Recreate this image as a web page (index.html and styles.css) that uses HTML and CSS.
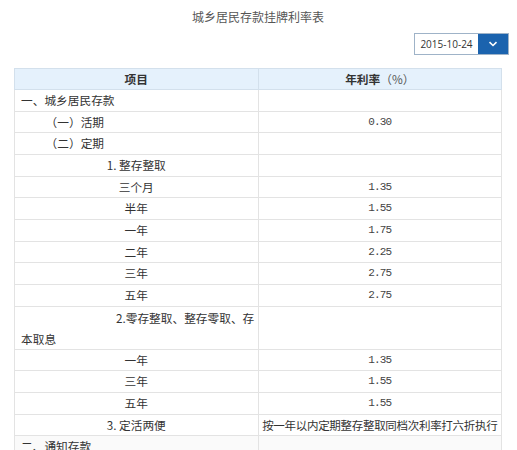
FILE: index.html
```html
<!DOCTYPE html>
<html lang="zh-CN">
<head>
<meta charset="utf-8">
<title>城乡居民存款挂牌利率表</title>
<link rel="stylesheet" href="styles.css">
</head>
<body>
<div class="page">
  <h1 class="title">城乡居民存款挂牌利率表</h1>
  <div class="toolbar">
    <div class="select">
      <span class="select-value">2015-10-24</span>
      <span class="select-btn">
        <svg width="10" height="6" viewBox="0 0 10 6"><path d="M1.5 1.2 L5 4.5 L8.5 1.2" fill="none" stroke="#fff" stroke-width="1.6"/></svg>
      </span>
    </div>
  </div>
  <table class="rates">
    <thead>
      <tr><th>项目</th><th>年利率<span class="unit">（%）</span></th></tr>
    </thead>
    <tbody>
      <tr><td class="lvl1">一、城乡居民存款</td><td class="num"></td></tr>
      <tr><td class="lvl2">（一）活期</td><td class="num">0.30</td></tr>
      <tr><td class="lvl2">（二）定期</td><td class="num"></td></tr>
      <tr><td class="ctr">1. 整存整取</td><td class="num"></td></tr>
      <tr><td class="ctr">三个月</td><td class="num">1.35</td></tr>
      <tr><td class="ctr">半年</td><td class="num">1.55</td></tr>
      <tr><td class="ctr">一年</td><td class="num">1.75</td></tr>
      <tr><td class="ctr">二年</td><td class="num">2.25</td></tr>
      <tr><td class="ctr">三年</td><td class="num">2.75</td></tr>
      <tr><td class="ctr">五年</td><td class="num">2.75</td></tr>
      <tr><td class="wrap">2.零存整取、整存零取、存本取息</td><td class="num"></td></tr>
      <tr><td class="ctr">一年</td><td class="num">1.35</td></tr>
      <tr><td class="ctr">三年</td><td class="num">1.55</td></tr>
      <tr><td class="ctr">五年</td><td class="num">1.55</td></tr>
      <tr><td class="ctr">3. 定活两便</td><td class="note">按一年以内定期整存整取同档次利率打六折执行</td></tr>
      <tr class="alt"><td class="lvl1">二、通知存款</td><td class="num"></td></tr>
    </tbody>
  </table>
</div>
</body>
</html>
```
FILE: styles.css
```css
html, body {
  margin: 0;
  padding: 0;
  background: #fff;
}
body {
  font-family: "Noto Sans CJK SC", "Noto Sans", sans-serif;
  color: #333;
}
.page {
  display: flex;
  flex-direction: column;
  padding: 0 15px 0 14px;
}
.title {
  margin: 0;
  height: 33px;
  line-height: 33px;
  font-size: 12px;
  font-weight: normal;
  color: #555;
  text-align: center;
}
.toolbar {
  display: flex;
  justify-content: flex-end;
  margin-right: -7px;
}
.select {
  display: flex;
  height: 22px;
  box-sizing: border-box;
  border: 1px solid #9fb3c8;
}
.select-value {
  width: 63px;
  line-height: 20px;
  font-family: "Open Sans", "Noto Sans", sans-serif;
  font-size: 10px;
  color: #333;
  text-align: center;
  background: #fff;
}
.select-btn {
  width: 30px;
  background: #1b63ae;
  display: flex;
  align-items: center;
  justify-content: center;
}
.rates {
  margin-top: 13px;
  width: 488px;
  border-collapse: collapse;
  table-layout: fixed;
  font-size: 11.7px;
}
.rates th, .rates td {
  width: 50%;
  border: 1px solid #e3e3e3;
  padding: 0 6px;
  line-height: 20.65px;
  vertical-align: middle;
}
.rates th {
  background: #e5f1fc;
  border-color: #d3e0ec;
  line-height: 20px;
  font-weight: bold;
  color: #333;
  text-align: center;
}
.unit {
  font-weight: normal;
  color: #555;
}
.lvl1 { text-align: left; }
.lvl2 { text-align: left; text-indent: 2.1em; }
.ctr { text-align: center; }
.rates td.wrap {
  text-align: left;
  text-indent: 95px;
  padding-right: 1px;
  line-height: 21px;
}
.num {
  text-align: center;
  font-family: "Liberation Mono", monospace;
  font-size: 11px;
  letter-spacing: -0.9px;
  color: #444;
}
.rates td.note {
  text-align: center;
  padding: 0 1px;
  white-space: nowrap;
  font-size: 11.5px;
  letter-spacing: -0.3px;
}
.alt td {
  background: #fafafa;
}
```
